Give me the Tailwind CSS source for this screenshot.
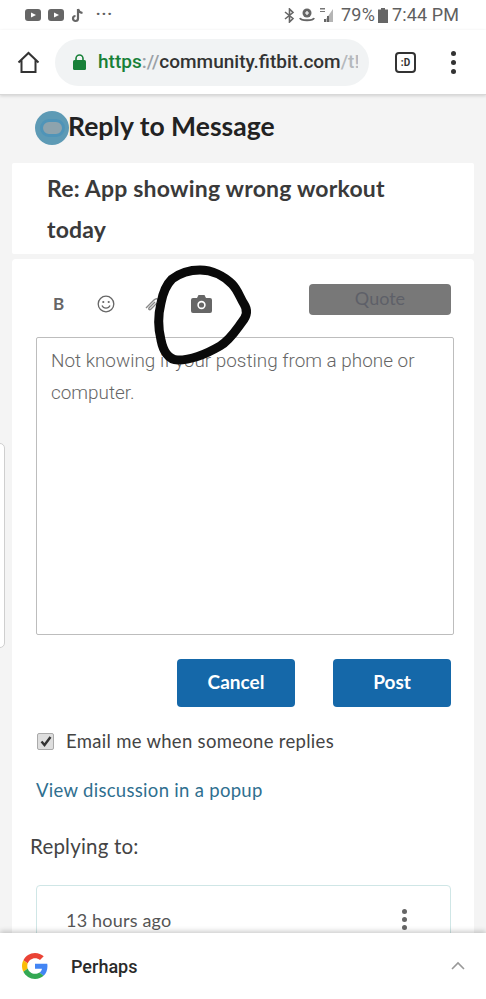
<!DOCTYPE html>
<html lang="en">
<head>
  <meta charset="UTF-8" />
  <meta name="viewport" content="width=device-width, initial-scale=1.0" />
  <title>Reply to Message</title>
  <script src="https://cdn.jsdelivr.net/npm/@tailwindcss/browser@4"></script>
</head>
<body class="bg-[#f4f4f4] font-['Open_Sans','Liberation_Sans',sans-serif]">
<div class="relative w-[486px] h-[999px] overflow-hidden">

  <!-- status bar -->
  <div class="h-[30px] bg-white flex items-center justify-between pl-[25px] pr-[27px] text-[#5f5f5f]">
    <div class="flex items-center gap-[7px]">
      <svg width="16" height="12" viewBox="0 0 16 12"><rect width="16" height="12" rx="3" fill="#666"/><path d="M6 3.5 11 6 6 8.500z" fill="#fff"/></svg>
      <svg width="16" height="12" viewBox="0 0 16 12"><rect width="16" height="12" rx="3" fill="#666"/><path d="M6 3.5 11 6 6 8.500z" fill="#fff"/></svg>
      <svg width="13" height="15" viewBox="0 0 13 15"><path d="M7 1v9.500a2.500 2.500 0 1 1-2.500-2.500M7 1c.5 2.500 2 3.500 4.500 4" fill="none" stroke="#666" stroke-width="2.200"/></svg>
      <span class="ml-[5px] font-bold text-[15px] leading-none tracking-[1.500px] -mt-[3px]">···</span>
    </div>
    <div class="flex items-center">
      <svg width="11" height="15" viewBox="0 0 11 15" class="mr-[4px]"><path d="M1 4l8 6.500L5.500 14V1L9 4.500 1 11" fill="none" stroke="#666" stroke-width="1.600"/></svg>
      <svg width="16" height="14" viewBox="0 0 16 14" class="mr-[4px]"><circle cx="8" cy="5" r="4.500" fill="#666"/><path d="M8 3v4M6 5h4" stroke="#fff" stroke-width="1.200"/><path d="M1 10c1 3 13 3 14 0" fill="none" stroke="#666" stroke-width="2"/></svg>
      <svg width="15" height="16" viewBox="0 0 15 16" class="mr-[7px]"><path d="M14 2v13H5z" fill="#b5b5b5"/><path d="M5 15h2v-3H5zM8 15h2V9H8z" fill="#666"/><path d="M1 1h5v1.500H1zM1 4h5v1H1z" fill="#777"/></svg>
      <span class="text-[18px] leading-none font-['Roboto'] mr-[3px] tracking-[0.2px]">79%</span>
      <svg width="10" height="15" viewBox="0 0 10 15" class="mr-[4px]"><path d="M3 0h4v1.500h3V15H0V1.500h3z" fill="#666"/></svg>
      <span class="text-[18px] leading-none font-['Roboto'] tracking-[0.1px]">7:44 PM</span>
    </div>
  </div>

  <!-- browser bar -->
  <div class="h-[65px] bg-white border-b border-[#d8d8d8] shadow-[0_1px_3px_rgba(0,0,0,0.15)] flex items-center pl-[17px] relative">
    <svg width="23" height="23" viewBox="0 0 23 23" class="shrink-0"><path d="M1.500 11.500 11.500 2l10 9.500M4.500 9v12h14V9" fill="none" stroke="#333" stroke-width="2"/></svg>
    <div class="ml-[15px] w-[314px] h-[47px] rounded-full bg-[#f1f3f4] flex items-center pl-[18px] overflow-hidden shrink-0">
      <svg width="13" height="16" viewBox="0 0 13 16" class="shrink-0"><path d="M3 7V4.500a3.500 3.500 0 0 1 7 0V7" fill="none" stroke="#188038" stroke-width="1.600"/><rect y="6" width="13" height="10" rx="1.500" fill="#188038"/></svg>
      <div class="ml-[12px] text-[19px] font-['Roboto'] font-medium whitespace-nowrap w-[260px] overflow-hidden text-[#333]"><span class="text-[#188038]">https</span><span class="text-[#9aa0a6]">://</span>community.fitbit.com<span class="text-[#b5b9bd]">/t!</span></div>
    </div>
    <div class="ml-[26px] w-[21px] h-[21px] border-2 border-[#333] rounded-[4px] flex items-center justify-center text-[10px] font-bold text-[#333] font-['Roboto'] shrink-0">:D</div>
    <div class="ml-[35px] flex flex-col gap-[4px] shrink-0">
      <div class="w-[5px] h-[5px] rounded-full bg-[#333]"></div>
      <div class="w-[5px] h-[5px] rounded-full bg-[#333]"></div>
      <div class="w-[5px] h-[5px] rounded-full bg-[#333]"></div>
    </div>
  </div>

  <!-- heading -->
  <div class="flex items-center h-[68px] pl-[35px] pb-[3px]">
    <div class="w-[34px] h-[34px] rounded-full bg-[#5d9ab5] flex items-center justify-center shrink-0">
      <div class="w-[25px] h-[18px] rounded-full bg-[#8da3ad] border-[3px] border-[#4f94b8]"></div>
    </div>
    <h1 class="text-[26.500px] font-bold text-[#222] leading-none font-['Lato'] -ml-[1px] -mt-[3px]">Reply to Message</h1>
  </div>

  <!-- title card -->
  <div class="mx-[12px] h-[91px] bg-white pl-[35px] pr-[60px] pt-[5px] rounded-[2px]">
    <h2 class="text-[23px] leading-[41px] font-bold text-[#3a3a3a] font-['Lato'] tracking-[0.2px]">Re: App showing wrong workout today</h2>
  </div>

  <!-- editor card -->
  <div class="mt-[5px] mx-[12px] h-[740px] bg-white rounded-t-[4px] px-[24px]">
    <div class="h-[78px] relative flex items-start">
      <span class="absolute left-[17px] top-[36px] text-[17px] leading-none font-bold text-[#666] font-['Lato']">B</span>
      <svg class="absolute left-[61px] top-[36px]" width="18" height="18" viewBox="0 0 18 18"><circle cx="9" cy="9" r="7.800" fill="none" stroke="#666" stroke-width="1.300"/><circle cx="6.300" cy="7" r="1.100" fill="#666"/><circle cx="11.700" cy="7" r="1.100" fill="#666"/><path d="M5 10.500c1.500 3.500 6.500 3.500 8 0" fill="none" stroke="#666" stroke-width="1.300"/></svg>
      <svg class="absolute left-[108px] top-[36px]" width="20" height="18" viewBox="0 0 20 18"><path d="M2 13 10 5c3-3 6 0 3.500 2.500L7 14c-1.500 1.500-3 0-1.800-1.300L11 7" fill="none" stroke="#888" stroke-width="1.400"/></svg>
      <svg class="absolute left-[155px] top-[36px]" width="21" height="18" viewBox="0 0 21 18"><path d="M2 3h4l1.500-3h6L15 3h4a2 2 0 0 1 2 2v11a2 2 0 0 1-2 2H2a2 2 0 0 1-2-2V5a2 2 0 0 1 2-2z" fill="#666"/><circle cx="10.500" cy="10" r="4.200" fill="#fff"/><circle cx="10.500" cy="10" r="2.600" fill="#666"/></svg>
      <div class="absolute left-[273px] top-[25px] w-[142px] h-[31px] rounded-[4px] bg-[#787878] text-[#5e6068] text-[18px] pb-[2px] flex items-center justify-center font-['Lato']">Quote</div>
    </div>
    <div class="w-[418px] h-[298px] border border-[#bdbdbd] rounded-[2px] px-[14px] pt-[7px] text-[18.900px] leading-[32px] text-[#666] font-['Roboto'] font-light">Not knowing if your posting from a phone or computer.</div>
    <div class="flex justify-end gap-[38px] mt-[24px] w-[415px]">
      <div class="w-[118px] h-[48px] rounded-[4px] bg-[#1568a9] text-white text-[19px] font-bold pb-[1px] flex items-center justify-center font-['Lato']">Cancel</div>
      <div class="w-[118px] h-[48px] rounded-[4px] bg-[#1568a9] text-white text-[19px] font-bold pb-[1px] flex items-center justify-center font-['Lato']">Post</div>
    </div>
    <div class="flex items-center mt-[21px] h-[26px]">
      <div class="w-[17px] h-[17px] ml-[1px] rounded-[2px] bg-[#dedede] border border-[#aaa] flex items-center justify-center shrink-0">
        <svg width="12" height="12" viewBox="0 0 12 12"><path d="M1.500 6.500 4.500 10 10.500 2" fill="none" stroke="#333" stroke-width="2.400"/></svg>
      </div>
      <span class="ml-[12px] text-[18.500px] text-[#444] font-['Lato'] leading-none tracking-[0.3px]">Email me when someone replies</span>
    </div>
    <div class="mt-[27px] text-[18.500px] text-[#2f6f8f] font-['Lato'] leading-none tracking-[0.3px]">View discussion in a popup</div>
    <div class="mt-[36px] -ml-[6px] text-[20.500px] text-[#444] font-['Lato'] leading-none tracking-[0.2px]">Replying to:</div>
    <div class="mt-[29px] w-[415px] h-[120px] border border-[#cfe6e6] rounded-[4px] relative">
      <span class="absolute left-[29px] top-[25px] text-[18px] text-[#555] font-['Lato'] leading-none tracking-[0.2px]">13 hours ago</span>
      <div class="absolute right-[43px] top-[23px] flex flex-col gap-[3px]">
        <div class="w-[5px] h-[5px] rounded-full bg-[#666]"></div>
        <div class="w-[5px] h-[5px] rounded-full bg-[#666]"></div>
        <div class="w-[5px] h-[5px] rounded-full bg-[#666]"></div>
      </div>
    </div>
  </div>

  <!-- side tab -->
  <div class="absolute left-[-6px] top-[443px] w-[11px] h-[205px] border border-[#cfcfcf] rounded-[5px] bg-white"></div>

  <!-- pen annotation -->
  <svg class="absolute left-0 top-0 pointer-events-none" width="486" height="999" viewBox="0 0 486 999">
    <path d="M200 270C212 270 224 276 232 284C238 290 240 298 244 304C248 310 247 316 242 322C236 330 230 340 220 346C208 353 192 360 178 360C168 360 163 350 161 340C158 328 158 315 161 303C163 292 166 285 172 279C180 273 190 270 200 270z" fill="none" stroke="#0a0a0a" stroke-width="9" stroke-linejoin="round"/>
  </svg>

  <!-- bottom sheet -->
  <div class="absolute left-0 bottom-0 w-full h-[66px] bg-white shadow-[0_-2px_5px_rgba(0,0,0,0.2)] flex items-center pl-[22px]">
    <svg width="26" height="26" viewBox="0 0 48 48" class="shrink-0">
      <path fill="#ea4335" d="M24 9.500c3.500 0 6.700 1.200 9.200 3.600l6.900-6.900C35.900 2.400 30.500 0 24 0 14.600 0 6.500 5.400 2.600 13.200l8 6.200C12.400 13.700 17.700 9.500 24 9.500z"/>
      <path fill="#4285f4" d="M47 24.500c0-1.600-.1-3.100-.4-4.500H24v9h12.900c-.6 3-2.200 5.500-4.700 7.200l7.700 6C44.400 37.900 47 31.800 47 24.500z"/>
      <path fill="#fbbc05" d="M10.500 28.600c-.5-1.400-.8-3-.8-4.600s.3-3.200.8-4.600l-8-6.200C1 16.400 0 20.100 0 24s1 7.600 2.600 10.800z"/>
      <path fill="#34a853" d="M24 48c6.500 0 11.900-2.100 15.900-5.800l-7.700-6c-2.200 1.400-4.900 2.300-8.200 2.300-6.300 0-11.600-4.200-13.500-9.900l-8 6.200C6.500 42.600 14.600 48 24 48z"/>
    </svg>
    <span class="ml-[23px] text-[18px] font-medium text-[#2a2a2a] font-['Roboto']">Perhaps</span>
    <svg class="absolute right-[21px] top-[28px]" width="14" height="9" viewBox="0 0 14 9"><path d="M1 8l6-6 6 6" fill="none" stroke="#999" stroke-width="1.600"/></svg>
  </div>
</div>
</body>
</html>
